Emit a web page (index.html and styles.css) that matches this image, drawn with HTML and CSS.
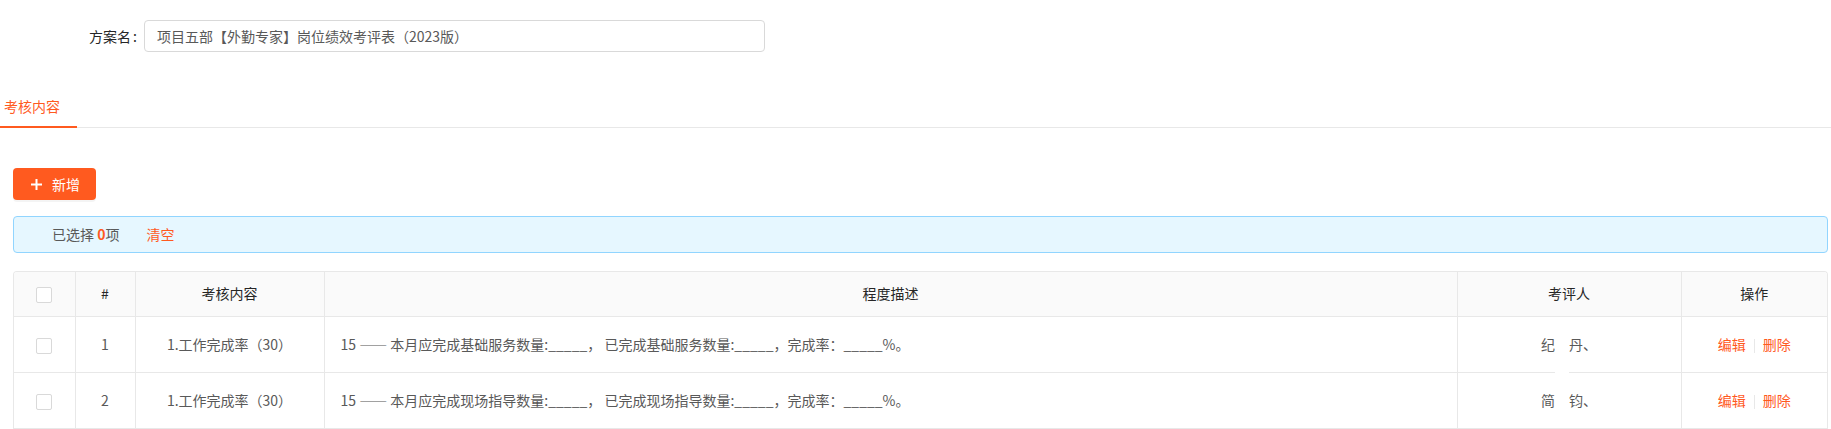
FILE: index.html
```html
<!DOCTYPE html>
<html lang="zh-CN">
<head>
    <meta charset="UTF-8">
    <title>方案编辑</title>
    <link rel="stylesheet" href="styles.css">
</head>
<body>
    <div class="form-row">
        <label class="form-label">方案名</label>
        <div class="form-input">项目五部【外勤专家】岗位绩效考评表（2023版）</div>
    </div>

    <div class="tabs">
        <div class="tab active">考核内容</div>
    </div>

    <div class="pane">
        <button class="btn-add">
            <svg class="plus" viewBox="0 0 11 11" width="11" height="11">
                <path d="M5.5 0v11M0 5.5h11" stroke="#fff" stroke-width="2"/>
            </svg>
            新增
        </button>

        <div class="alert">
            已选择 <span class="count">0</span>项
            <a class="link clear">清空</a>
        </div>

        <div class="table-wrap">
            <table class="grid">
                <colgroup>
                    <col style="width:61px">
                    <col style="width:60px">
                    <col style="width:189px">
                    <col>
                    <col style="width:224px">
                    <col style="width:146px">
                </colgroup>
                <thead>
                    <tr>
                        <th><span class="check"></span></th>
                        <th>#</th>
                        <th>考核内容</th>
                        <th>程度描述</th>
                        <th>考评人</th>
                        <th>操作</th>
                    </tr>
                </thead>
                <tbody>
                    <tr>
                        <td class="center"><span class="check"></span></td>
                        <td class="center">1</td>
                        <td class="center">1.工作完成率（30）</td>
                        <td>15 —— 本月应完成基础服务数量:_____， 已完成基础服务数量:_____，完成率：_____%。</td>
                        <td class="center">纪<span class="mask">　</span>丹、</td>
                        <td class="center"><a class="link">编辑</a><span class="divider"></span><a class="link">删除</a></td>
                    </tr>
                    <tr>
                        <td class="center"><span class="check"></span></td>
                        <td class="center">2</td>
                        <td class="center">1.工作完成率（30）</td>
                        <td>15 —— 本月应完成现场指导数量:_____， 已完成现场指导数量:_____，完成率：_____%。</td>
                        <td class="center">简　钧、</td>
                        <td class="center"><a class="link">编辑</a><span class="divider"></span><a class="link">删除</a></td>
                    </tr>
                </tbody>
            </table>
        </div>
    </div>
</body>
</html>
```

FILE: styles.css
```css
:root {
    --primary: #ff5a1f;
    --border: #e8e8e8;
    --text: #595959;
    --heading: #262626;
}

* {
    box-sizing: border-box;
    margin: 0;
    padding: 0;
}

body {
    font-family: "Noto Sans CJK SC", "Noto Sans", sans-serif;
    font-size: 14px;
    line-height: 21px;
    color: var(--text);
    background: #fff;
}

.form-row {
    display: flex;
    align-items: center;
    padding-top: 20px;
}

.form-label {
    width: 144px;
    text-align: right;
    color: var(--heading);
}

.form-label::after {
    content: ":";
    margin: 0 7px 0 2px;
}

.form-input {
    width: 621px;
    height: 32px;
    padding: 5px 12px;
    border: 1px solid #d9d9d9;
    border-radius: 4px;
    color: var(--text);
}

.tabs {
    display: flex;
    margin-top: 31px;
    border-bottom: 1px solid var(--border);
}

.tab {
    width: 77px;
    padding: 13px 0 9px 4px;
    margin-bottom: -1px;
}

.tab.active {
    color: var(--primary);
    border-bottom: 2px solid var(--primary);
}

.pane {
    padding: 40px 3px 0 13px;
}

.btn-add {
    display: flex;
    align-items: center;
    gap: 10px;
    height: 32px;
    padding: 0 16px 0 18px;
    border: none;
    border-radius: 4px;
    background: var(--primary);
    color: #fff;
    font: inherit;
    box-shadow: 0 2px 0 rgba(0, 0, 0, 0.045);
    cursor: pointer;
}

.alert {
    margin-top: 16px;
    padding: 7px 15px 7px 38px;
    background: #e6f7ff;
    border: 1px solid #91d5ff;
    border-radius: 4px;
}

.count {
    color: var(--primary);
    font-weight: 600;
}

.link {
    color: var(--primary);
    cursor: pointer;
}

.clear {
    margin-left: 24px;
}

.table-wrap {
    margin-top: 18px;
    border: 1px solid var(--border);
    border-radius: 4px 4px 0 0;
    border-bottom: none;
    overflow: hidden;
}

.grid {
    width: 100%;
    table-layout: fixed;
    border-collapse: collapse;
}

.grid th,
.grid td {
    border-right: 1px solid var(--border);
    border-bottom: 1px solid var(--border);
}

.grid th:last-child,
.grid td:last-child {
    border-right: none;
}

.grid th {
    height: 44px;
    background: #fafafa;
    color: var(--heading);
    font-weight: 400;
    text-align: center;
}

.grid td {
    height: 56px;
    padding: 0 16px;
}

.grid td.center {
    text-align: center;
}

/* blank patch left over from the name redaction */
.mask {
    position: relative;
}

.mask::after {
    content: "";
    position: absolute;
    left: 0;
    right: 0;
    top: 0;
    height: 40px;
    background: #fff;
}

.check {
    display: inline-block;
    width: 16px;
    height: 16px;
    border: 1px solid #d9d9d9;
    border-radius: 2px;
    background: #fff;
    vertical-align: middle;
}

.divider {
    display: inline-block;
    width: 1px;
    height: 14px;
    margin: 0 8px;
    background: var(--border);
    vertical-align: middle;
}
```
